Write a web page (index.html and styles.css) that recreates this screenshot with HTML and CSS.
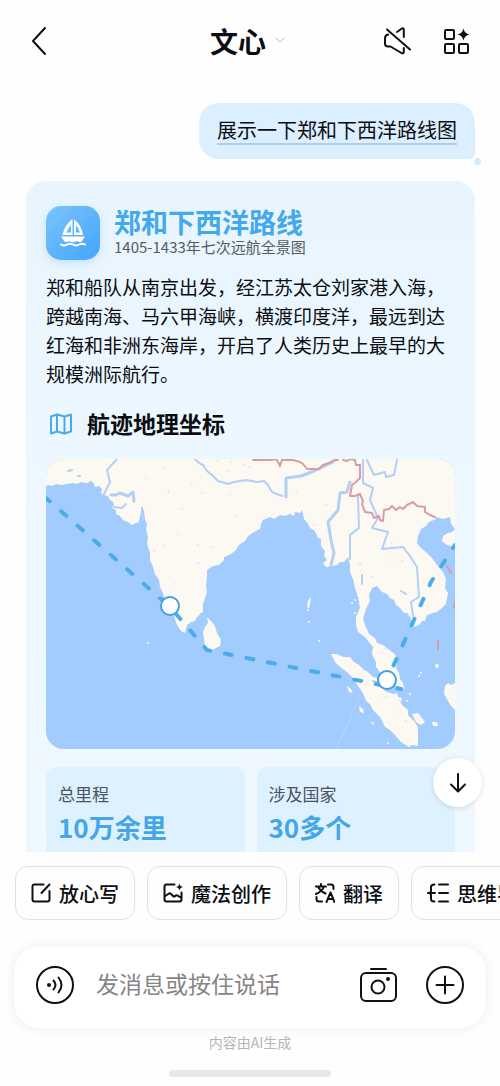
FILE: index.html
```html
<!DOCTYPE html>
<html lang="zh-CN">
<head>
  <meta charset="utf-8">
  <meta name="viewport" content="width=device-width, initial-scale=1">
  <title>文心</title>
  <link rel="stylesheet" href="styles.css">
</head>
<body>
  <header class="topbar">
    <button class="icon-button" type="button" aria-label="返回">
      <svg width="30" height="32" viewBox="0 0 30 32"><path d="M21 3 9 16l12 13"/></svg>
    </button>
    <button class="brand" type="button">
      文心
      <svg width="12" height="8" viewBox="0 0 12 8"><path d="m2 1 4 4 4-4"/></svg>
    </button>
    <div class="topbar-actions">
      <button class="icon-button" type="button" aria-label="静音">
        <svg width="30" height="30" viewBox="0 0 30 30">
          <path d="M15 6 19.500 2.800Q21.800 1.500 21.800 4V11M6.200 8.500Q3 9 3 12.500V17.500Q3 20.500 6 20.500L8.500 20.500 19.500 27Q21.800 28 21.800 25.800V22"/>
          <path d="m5 3.500 23 20"/>
        </svg>
      </button>
      <button class="icon-button" type="button" aria-label="更多功能">
        <svg width="30" height="30" viewBox="0 0 30 30">
          <rect x="3" y="4" width="9" height="9" rx="1"/>
          <rect x="3" y="18" width="9" height="9" rx="1"/>
          <rect x="17" y="18" width="9" height="9" rx="1"/>
          <path class="solid" d="M21.500 2.500Q22.500 7.500 27.500 8.500 22.500 9.500 21.500 14.500 20.500 9.500 15.500 8.500 20.500 7.500 21.500 2.500Z"/>
        </svg>
      </button>
    </div>
  </header>

  <div class="chat">
    <main class="messages">
      <div class="bubble"><a href="#card">展示一下郑和下西洋路线图</a></div>

      <article class="card" id="card">
        <div class="card-head">
          <div class="card-icon">
            <svg width="28" height="30" viewBox="0 0 28 30">
              <path fill-rule="evenodd" d="M13.500 1Q5 7.500 3.500 17H13.500ZM12 7V14.500H7.500Q9 10 12 7Z"/>
              <path fill-rule="evenodd" d="M15 1.500Q22.500 7 24 17H15ZM17 7V14.500H20.800Q19.800 10 17 7Z"/>
              <path d="M2 18.500H26L22.500 23.500Q20.500 24.500 18 23 14 25.500 10 23 7.500 24.500 5.500 23.500Z"/>
              <path class="wave" d="M2 26.500Q5 28.500 8 26.500 11 24.800 14 26.500 17 28.500 20 26.500 23 24.800 26 26.500"/>
            </svg>
          </div>
          <div>
            <h1 class="card-title">郑和下西洋路线</h1>
            <p class="card-subtitle">1405-1433年七次远航全景图</p>
          </div>
        </div>

        <p class="intro">郑和船队从南京出发，经江苏太仓刘家港入海，跨越南海、马六甲海峡，横渡印度洋，最远到达红海和非洲东海岸，开启了人类历史上最早的大规模洲际航行。</p>

        <h2 class="section-title">
          <svg width="24" height="24" viewBox="0 0 24 24"><path d="M2 5.500 8 3.500 15.500 5.500 22 3.500V20.500L15.500 22.500 8 20.500 2 22.500ZM8 3.500V20.500M15.500 5.500V22.500"/></svg>
          航迹地理坐标
        </h2>

        <svg class="map" viewBox="0 0 409 290" role="img" aria-label="航迹地理坐标">
          <!-- 陆地 -->
          <g class="land">
            <path d="M0 0V27L3 26 6 27 10 25 16 26 20 25 27 24 31 25 35 23 39 24 42 24 44 22 47 23 49 28 53 27 56 30 55 34 58 36 62 37 64 41 67 43 68 46 66 49 70 51 70 55 74 57 77 61 82 63 86 66 90 64 93 63 94 57 95 54 96 48 98 52 99 61 101 65 100 70 102 78 101 85 104 94 104 101 107 108 109 115 113 121 114 128 117 134 118 138 122 142 124 150 128 156 129 160 131 166 135 172 139 174 141 166 145 163 149 162 151 158 155 154 157 153 157 145 159 139 161 133 160 127 161 118 161 111 167 107 173 106 178 101 178 98 185 95 190 91 193 86 199 82 202 77 208 73 214 70 215 65 217 61 224 58 228 60 234 56 239 57 244 55 248 57 249 53 254 54 256 51 258 60 262 65 264 69 269 72 272 79 275 80 275 87 279 92 278 97 281 101 277 104 280 108 286 107 291 106 294 103 298 103 302 98 304 106 304 113 307 120 309 129 312 138 314 149 310 158 310 166 312 173 319 178 322 182 327 188 326 195 330 203 330 208 337 217 342 222 347 226 351 227 358 230 357 224 354 220 353 214 350 209 351 202 349 195 342 190 337 186 331 184 329 179 323 175 319 166 317 160 320 150 324 142 323 136 326 129 331 127 336 133 341 135 344 139 348 141 350 146 354 149 358 154 361 154 365 159 365 163 368 168 373 166 376 162 379 162 381 156 387 154 391 153 396 149 400 145 402 134 399 129 400 120 397 113 391 106 386 99 381 94 374 88 371 84 372 77 375 70 380 67 383 63 388 61 391 58 397 60 404 58 405 65 409 70V0Z"/>
            <path d="M396 82 397 77 402 74 406 73 409 70V88L401 86Z"/>
            <path d="M161 158 165 162 169 167 171 174 175 181 174 187 168 190 164 192 159 187 158 180 157 173 159 168 162 164Z"/>
            <path d="M285 195 291 195 297 198 304 198 308 203 313 206 318 211 322 213 327 218 331 219 333 225 337 230 341 233 348 235 351 234 353 241 357 247 362 251 362 256 368 262 372 268V287L366 286 363 288 355 283 349 276 344 271 339 268 334 258 327 251 324 245 320 242 317 234 312 227 307 219 301 213 294 208 289 203Z"/>
            <path d="M409 224 405 226 402 224 399 227 398 235 402 242 405 247 409 251Z"/>
            <path d="M366 255 372 254 376 259 379 263 375 266 370 263ZM386 263 391 263 392 267 387 267Z"/>
            <path d="M301 227 304 229 307 234 303 233ZM313 247 317 250 318 254 314 253ZM324 262 328 264 327 266ZM351 238 356 239 355 243ZM262 142 265 138 264 144 263 150 261 147Z"/>
            <circle cx="391" cy="207" r="2"/><circle cx="102" cy="184" r="1"/>
            <circle cx="293" cy="219" r="1"/><circle cx="263" cy="163" r="1"/>
            <circle cx="262" cy="151" r="1"/><circle cx="273" cy="182" r="1"/>
            <circle cx="361" cy="242" r="1"/><circle cx="364" cy="235" r="1"/>
            <circle cx="373" cy="217" r="1"/><circle cx="375" cy="214" r="1"/>
            <circle cx="309" cy="141" r="1"/><circle cx="306" cy="144" r="1"/>
            <circle cx="309" cy="154" r="1"/><circle cx="342" cy="284" r="1"/>
          </g>
          <path class="maritime" d="M290 290 314 238"/>
          <!-- 河流与湖泊 -->
          <g class="rivers">
            <path d="M71 0 61 11 64 23 58 35M149 0 153 4 157 6 161 12 166 16 172 22 182 25 188 23 194 22 200 21 211 23 218 22 222 26 226 33 236 37"/>
            <path class="wide" d="M240 38V19L255 17 268 12 287 3"/>
            <path class="wide" d="M304 23 301 33 294 34 292 51 282 63 285 81 288 94 285 106"/>
            <path d="M312 38 313 69 304 76V100"/>
            <path d="M317 0V24L327 29 324 41 332 59 326 69 342 73 336 90 357 88 364 97 371 108 373 138 365 143 367 157M321 1 328 16 339 13 340 18 348 16 351 1M96 49 97 61"/>
            <path class="wide" d="M65 36 70 36 74 34 82 37 87 33 88 42"/>
            <path d="M68 48 76 49 80 45M22 12 26 11M32 17 34 17M316 125V116M355 132 360 135M327 222 332 224"/>
          </g>
          <path class="speckles" d="M100 19h1M118 9h1M122 31h1M122 33h1M145 26h1M156 34h1M183 35h1M190 57h1M171 2h1M185 3h1M198 6h1M151 86h1M165 88h1M152 104h1M108 92h1M118 87h1M128 125h1M132 75h1M135 50h1M182 12h1M203 8h1M268 66h1M313 104h1M314 106h1M325 118h1M345 84h1M346 101h1M356 102h1M250 34h1M280 46h1M335 194h1M339 190h1M338 239h1M340 238h1M351 253h1M359 262h1"/>
          <!-- 国界 -->
          <path class="border" d="M207 1H225L230 0 232 3 234 7 236 1H247L254 3 257 5 261 10H273L277 6 283 4 289 1H292M297 1 301 2 304 0 309 1 310 6 314 6V19L310 23 306 26 304 37 309 37 314 35 317 42 316 45 319 53 326 54 328 59 333 57 334 61 337 62 338 51 343 50 346 47 350 51 354 48 357 50 361 46 367 43 371 47 379 48 379 53 384 56 389 58M401 107 405 114M408 149 410 138M392 182V191"/>
          <!-- 航线 -->
          <path class="route" d="M0 39 124 148 161 191 355 230"/>
          <path class="route route-east" d="M341 221 385 123 409 86"/>
          <circle class="stop" cx="124" cy="147" r="9"/>
          <circle class="stop" cx="341" cy="221" r="9"/>
        </svg>

        <dl class="stats">
          <div class="stat">
            <dt>总里程</dt>
            <dd>10万余里</dd>
          </div>
          <div class="stat">
            <dt>涉及国家</dt>
            <dd>30多个</dd>
          </div>
        </dl>
      </article>
    </main>

    <button class="scroll-down" type="button" aria-label="滚动到底部">
      <svg width="20" height="22" viewBox="0 0 20 22"><path d="M10 2V19M3 12.500 10 19.500 17 12.500"/></svg>
    </button>
  </div>

  <footer class="bottom">
    <nav class="chips">
      <button class="chip" type="button">
        <svg width="20" height="20" viewBox="0 0 20 20"><path d="M12.500 1.500H3.500Q1.500 1.500 1.500 3.500V16.500Q1.500 18.500 3.500 18.500H16.500Q18.500 18.500 18.500 16.500V8M18.500 1.500 10.500 10"/></svg>
        放心写
      </button>
      <button class="chip" type="button">
        <svg width="20" height="20" viewBox="0 0 20 20">
          <path d="M11.500 1.500H3.500Q1.500 1.500 1.500 3.500V16.500Q1.500 18.500 3.500 18.500H16.500Q18.500 18.500 18.500 16.500V9.500M1.500 13.500 6 10.500Q7 10 8 11L10 13Q11 14 12 13L13 12.500Q14 12 15 12.800L18.500 15"/>
          <path class="solid" d="M16.500.500Q17 3.500 20 4 17 4.500 16.500 7.500 16 4.500 13 4 16 3.500 16.500.500Z"/>
        </svg>
        魔法创作
      </button>
      <button class="chip" type="button">
        <svg width="20" height="20" viewBox="0 0 20 20"><path d="M1 3.500H11M6 1V3.500M9 3.500Q7.500 8 1 11M3 3.500Q5 8 10.500 10.500M13 1.500H16Q18.500 1.500 18.500 4V6M1.500 14V16Q1.500 18.500 4 18.500H7M11.500 19 15.500 9.500 19.500 19M13 16H18"/></svg>
        翻译
      </button>
      <button class="chip" type="button">
        <svg width="22" height="20" viewBox="0 0 22 20"><path d="M7.500 1.500Q4 1.500 4 4V8Q4 10 1 10 4 10 4 12V16Q4 18.500 7.500 18.500M4 10H8M12 1.500H21M12 10H21M12 18.500H21"/></svg>
        思维导图
      </button>
    </nav>

    <form class="composer">
      <button class="icon-button" type="button" aria-label="按住说话">
        <svg width="40" height="40" viewBox="0 0 40 40">
          <circle cx="20" cy="20" r="18"/>
          <circle class="solid" cx="14" cy="20" r="2"/>
          <path d="M18.500 15.500Q22.500 20 18.500 24.500M23.500 12.500Q29.500 20 23.500 27.500"/>
        </svg>
      </button>
      <input class="message-input" type="text" placeholder="发消息或按住说话" aria-label="发消息或按住说话">
      <div class="composer-actions">
        <button class="icon-button" type="button" aria-label="拍照">
          <svg width="40" height="40" viewBox="0 0 40 40">
            <rect x="3" y="8" width="35" height="28" rx="5"/>
            <circle cx="20" cy="22" r="6.500"/>
            <circle class="solid" cx="30" cy="14" r="2"/>
            <path d="M13 4H28"/>
          </svg>
        </button>
        <button class="icon-button" type="button" aria-label="添加">
          <svg width="40" height="40" viewBox="0 0 40 40"><circle cx="20" cy="20" r="18"/><path d="M20 11.500V28.500M11.500 20H28.500"/></svg>
        </button>
      </div>
    </form>
    <p class="disclaimer">内容由AI生成</p>
    <div class="home-bar"></div>
  </footer>
</body>
</html>
```

FILE: styles.css
```css
* {
  box-sizing: border-box;
}
body {
  margin: 0;
  height: 100vh;
  display: flex;
  flex-direction: column;
  overflow: hidden;
  background-color: #fefefe;
  color: #0b0d12;
  font-family: "Noto Sans CJK SC", sans-serif;
}
h1, h2, p, dl, dd {
  margin: 0;
}
button {
  padding: 0;
  border: none;
  background: none;
  color: inherit;
  font-family: inherit;
  cursor: pointer;
}
svg {
  display: block;
  flex-shrink: 0;
  fill: none;
  stroke: #111;
  stroke-width: 2;
  stroke-linecap: round;
  stroke-linejoin: round;
}
.solid {
  fill: #111;
  stroke: none;
}

/* 顶栏 */
.topbar {
  display: grid;
  grid-template-columns: 1fr auto 1fr;
  align-items: center;
  height: 82px;
  padding: 0 28px 0 24px;
  flex-shrink: 0;
}
.brand {
  display: flex;
  align-items: center;
  gap: 8px;
  font-size: 28px;
  font-weight: bold;
  line-height: 40px;
}
.brand svg {
  stroke: #bcbcbc;
  stroke-width: 1;
}
.topbar-actions {
  display: flex;
  justify-content: flex-end;
  gap: 30px;
}

/* 对话区 */
.chat {
  position: relative;
  flex: 1;
  min-height: 0;
}
.messages {
  height: 100%;
  overflow: hidden;
  display: flex;
  flex-direction: column;
  gap: 22px;
  padding: 21px 25px 0 26px;
}
.bubble {
  position: relative;
  align-self: flex-end;
  flex-shrink: 0;
  padding: 14px 18px;
  border-radius: 20px 20px 6px 20px;
  background-color: #dceffe;
}
.bubble::after {
  content: "";
  position: absolute;
  right: -6px;
  bottom: -6px;
  width: 7px;
  height: 7px;
  border-radius: 50%;
  background-color: #d3eafc;
}
.bubble a {
  display: block;
  border-bottom: 2px solid #b4cbe6;
  color: inherit;
  font-size: 20px;
  line-height: 26px;
  text-decoration: none;
}
.card {
  flex-shrink: 0;
  padding: 25px 20px;
  border-radius: 20px;
  background: linear-gradient(#e8f5ff, #edf7ff 40%, #eff8ff);
}
.card-head {
  display: flex;
  align-items: flex-start;
  gap: 14px;
}
.card-icon {
  display: flex;
  align-items: center;
  justify-content: center;
  width: 54px;
  height: 54px;
  border-radius: 15px;
  background: linear-gradient(135deg, #7cc4fb, #42a5fa);
  box-shadow: 0 3px 8px #c3e2fb;
}
.card-icon svg {
  fill: #fff;
  stroke: none;
}
.card-icon .wave {
  fill: none;
  stroke: #fff;
  stroke-width: 2;
}
.card-title {
  color: #44a9ec;
  font-size: 27px;
  font-weight: bold;
  line-height: 32px;
}
.card-subtitle {
  color: #555b63;
  font-size: 15px;
  line-height: 18px;
}
.intro {
  margin-top: 12px;
  font-size: 19px;
  line-height: 29px;
}
.section-title {
  display: flex;
  align-items: center;
  gap: 14px;
  margin: 20px 0 21px;
  padding-left: 3px;
  font-size: 23px;
  font-weight: bold;
  line-height: 30px;
}
.section-title svg {
  stroke: #4aabea;
}

/* 地图 */
.map {
  width: 100%;
  height: auto;
  border-radius: 18px;
  background-color: #a3ccfe;
}
.land {
  fill: #fcf9f3;
  stroke: none;
}
.rivers {
  stroke: #b3cff4;
}
.rivers .wide {
  stroke-width: 3;
}
.maritime {
  stroke: #b7d6fc;
  stroke-width: 1;
}
.speckles {
  stroke: #d5d7e4;
  stroke-width: 1;
}
.border {
  stroke: #d99ca7;
}
.route {
  stroke: #4bacec;
  stroke-width: 4;
  stroke-dasharray: 7 15;
  stroke-dashoffset: 2;
}
.route-east {
  stroke-dashoffset: 6;
}
.stop {
  fill: #fff;
  stroke: #43a0df;
}

.stats {
  display: grid;
  grid-template-columns: 1fr 1fr;
  gap: 12px;
  margin-top: 18px;
}
.stat {
  padding: 14px 12px;
  border-radius: 10px;
  background-color: #ddf1ff;
}
.stat dt {
  color: #4b535c;
  font-size: 17px;
  line-height: 26px;
}
.stat dd {
  color: #44a6e8;
  font-size: 26px;
  font-weight: bold;
  line-height: 40px;
}
.scroll-down {
  position: absolute;
  right: 18px;
  bottom: 45px;
  display: flex;
  align-items: center;
  justify-content: center;
  width: 49px;
  height: 49px;
  border-radius: 50%;
  background-color: #fff;
  box-shadow: 0 1px 5px rgba(0, 40, 80, 0.15);
}

/* 底部输入 */
.bottom {
  flex-shrink: 0;
  padding: 14px 14px 9px;
}
.chips {
  display: flex;
  gap: 12px;
  margin-right: -14px;
  padding-left: 1px;
  overflow: hidden;
}
.chip {
  display: flex;
  align-items: center;
  gap: 8px;
  flex-shrink: 0;
  height: 54px;
  padding: 0 15px;
  border: 1px solid #e2e2e2;
  border-radius: 13px;
  font-size: 20px;
  font-weight: 500;
  white-space: nowrap;
}
.composer {
  display: flex;
  align-items: center;
  gap: 21px;
  height: 82px;
  margin-top: 26px;
  padding: 0 21px 4px;
  border-radius: 26px;
  background-color: #fff;
  box-shadow: 0 0 12px rgba(0, 0, 0, 0.07);
}
.composer-actions {
  display: flex;
  gap: 27px;
}
.message-input {
  flex: 1;
  min-width: 0;
  height: 48px;
  padding: 0 0 4px;
  border: none;
  outline: none;
  background: none;
  font-family: inherit;
  font-size: 23px;
}
.message-input::placeholder {
  color: #858585;
  opacity: 1;
}
.disclaimer {
  margin-top: 4px;
  color: #b5b5b5;
  font-size: 14px;
  line-height: 20px;
  text-align: center;
}
.home-bar {
  width: 162px;
  height: 7px;
  margin: 18px auto 0;
  border-radius: 4px;
  background-color: #e8e8e8;
}
```
